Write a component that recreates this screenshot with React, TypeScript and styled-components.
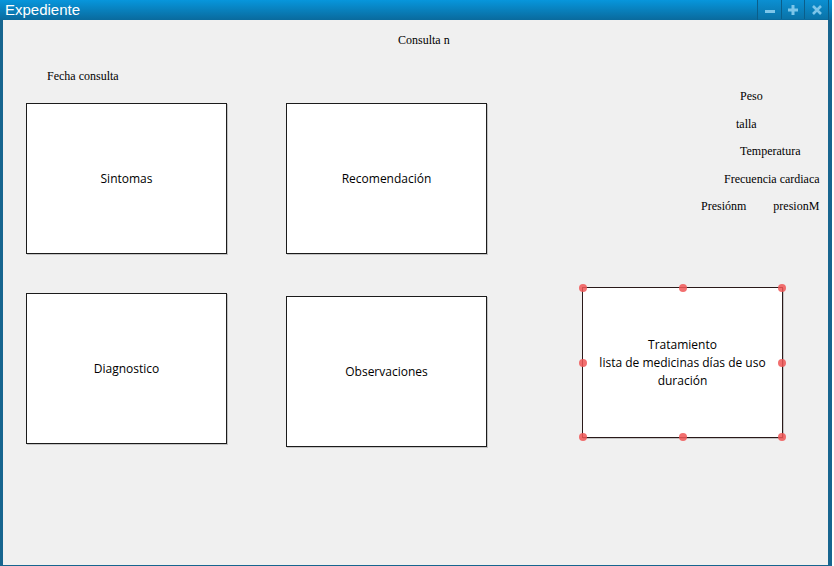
import * as React from 'react';
import styled, { createGlobalStyle } from 'styled-components';

const GlobalStyle = createGlobalStyle`
  html, body { margin:0; padding:0; background:#ffffff; }
  body { width:834px; height:566px; overflow:hidden; }
`;

const Window = styled.div`
  width:832px; height:566px;
  display:flex; flex-direction:column;
  background:#17658f;
  box-sizing:border-box;
`;

const TitleBar = styled.div`
  height:20px;
  display:flex; align-items:stretch;
  background:linear-gradient(#0796dc, #0a6a9d);
  padding-right:3px;
`;

const Title = styled.h1`
  flex:1;
  margin:0; padding-left:5px;
  font:15px/20px "Liberation Sans", Arial, sans-serif;
  color:#ffffff;
`;

const WinButtons = styled.div`
  display:flex;
  border-left:1px solid #0b5e8a;
  border-right:1px solid #0b5e8a;
`;

const WinButton = styled.button`
  width:${(p) => p.w || 23}px; height:19px;
  margin:0; padding:0;
  border:0; border-left:${(p) => (p.first ? '0' : '1px solid #0b5e8a')};
  background:linear-gradient(#0b8fd2, #0a73a8);
  display:flex; align-items:center; justify-content:center;
  svg { display:block; }
`;

const Canvas = styled.div`
  flex:1;
  margin:0 4px 1px 3px;
  background:#f0f0f0;
  display:flex; flex-direction:column;
  font:12px/14px "Liberation Serif", "Times New Roman", serif;
  color:#000000;
`;

const TopLabel = styled.div`
  padding:13px 0 0 395px;
`;

const Workspace = styled.div`
  display:flex;
`;

const LeftCol = styled.div`
  padding-left:23px;
  display:flex; flex-direction:column;
`;

const FieldLabel = styled.div`
  margin:22px 0 0 21px;
`;

const BoxGrid = styled.div`
  margin-top:20px;
  display:grid;
  grid-template-columns:201px 201px;
  column-gap:59px;
  row-gap:39px;
  align-items:start;
`;

const SketchBox = styled.div`
  position:relative;
  width:201px; height:151px;
  margin-top:${(p) => p.offset || 0}px;
  box-sizing:border-box;
  border:1px solid #1b1b1b;
  box-shadow:1px 1px 0 rgba(0,0,0,0.18);
  background:#ffffff;
  display:flex; align-items:center; justify-content:center;
  text-align:center;
  font:12px/18px "Comic Sans MS", "Open Sans", sans-serif;
  color:#000000;
`;

const Handle = styled.span`
  position:absolute;
  width:8px; height:8px;
  border-radius:50%;
  background:rgba(240,86,86,0.85);
  left:${(p) => p.x}%; top:${(p) => p.y}%;
  transform:translate(-50%, -50%);
`;

const RightCol = styled.div`
  margin-left:95px;
  display:flex; flex-direction:column;
`;

const Vitals = styled.div`
  margin-top:42px;
  display:flex; flex-direction:column;
  row-gap:13.5px;
`;

const VitalRow = styled.div`
  display:flex;
  column-gap:${(p) => p.gap || 0}px;
  padding-left:${(p) => p.indent}px;
  white-space:nowrap;
`;

const Treatment = styled(SketchBox)`
  margin-top:74px;
  border-color:#2a1a1a;
`;

const handles = [
  [0, 0], [50, 0], [100, 0],
  [0, 50], [100, 50],
  [0, 100], [50, 100], [100, 100],
];

const Minus = () => (
  <svg width="10" height="10" viewBox="0 0 10 10">
    <rect x="0" y="5" width="10" height="3" fill="#7cc5e9" />
  </svg>
);
const Plus = () => (
  <svg width="10" height="10" viewBox="0 0 10 10">
    <rect x="0" y="3.5" width="10" height="3" fill="#7cc5e9" />
    <rect x="3.5" y="0" width="3" height="10" fill="#7cc5e9" />
  </svg>
);
const Close = () => (
  <svg width="10" height="10" viewBox="0 0 10 10">
    <path d="M1 1 L9 9 M9 1 L1 9" stroke="#7cc5e9" strokeWidth="2.6" />
  </svg>
);

const App = () => {
  return (
    <Window>
      <GlobalStyle />
      <TitleBar>
        <Title>Expediente</Title>
        <WinButtons>
          <WinButton first w={23}><Minus /></WinButton>
          <WinButton w={23}><Plus /></WinButton>
          <WinButton w={24}><Close /></WinButton>
        </WinButtons>
      </TitleBar>
      <Canvas>
        <TopLabel>Consulta n</TopLabel>
        <Workspace>
          <LeftCol>
            <FieldLabel>Fecha consulta</FieldLabel>
            <BoxGrid>
              <SketchBox>Sintomas</SketchBox>
              <SketchBox>Recomendación</SketchBox>
              <SketchBox>Diagnostico</SketchBox>
              <SketchBox offset={3}>Observaciones</SketchBox>
            </BoxGrid>
          </LeftCol>
          <RightCol>
            <Vitals>
              <VitalRow indent={158}>Peso</VitalRow>
              <VitalRow indent={154}>talla</VitalRow>
              <VitalRow indent={158}>Temperatura</VitalRow>
              <VitalRow indent={142}>Frecuencia cardiaca</VitalRow>
              <VitalRow indent={119} gap={27}>
                <span>Presiónm</span>
                <span>presionM</span>
              </VitalRow>
            </Vitals>
            <Treatment>
              <div>
                Tratamiento<br />
                lista de medicinas días de uso<br />
                duración
              </div>
              {handles.map(([x, y]) => (
                <Handle key={`${x}-${y}`} x={x} y={y} />
              ))}
            </Treatment>
          </RightCol>
        </Workspace>
      </Canvas>
    </Window>
  );
};

export default App;
